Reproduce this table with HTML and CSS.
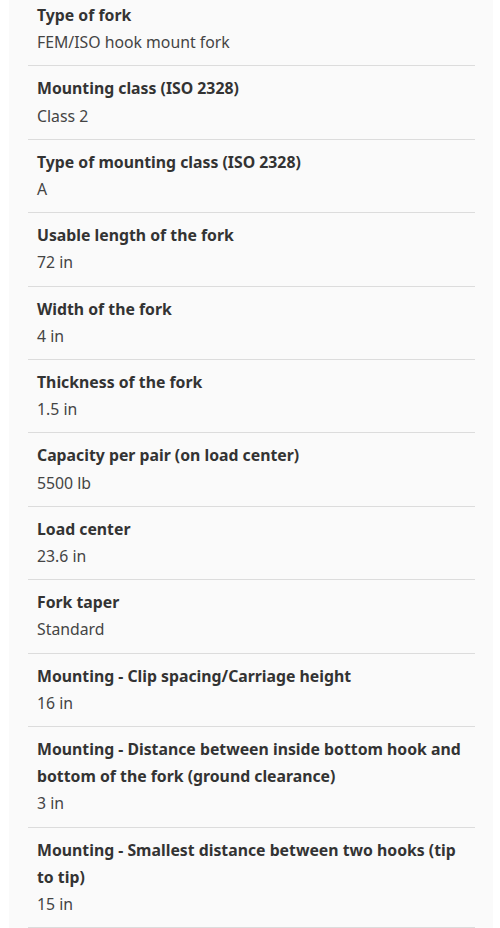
FILE: index.html
```html
<!DOCTYPE html>
<html lang="en">
<head>
  <meta charset="UTF-8" />
  <meta name="viewport" content="width=device-width, initial-scale=1.0"/>
  <title>Fork specifications</title>
  <link rel="stylesheet" href="styles.css">
</head>
<body>

  <!-- Specification list -->
  <div class="specs">
    <dl class="spec-list">
      <div class="spec">
        <dt>Type of fork</dt>
        <dd>FEM/ISO hook mount fork</dd>
      </div>
      <div class="spec">
        <dt>Mounting class (ISO 2328)</dt>
        <dd>Class 2</dd>
      </div>
      <div class="spec">
        <dt>Type of mounting class (ISO 2328)</dt>
        <dd>A</dd>
      </div>
      <div class="spec">
        <dt>Usable length of the fork</dt>
        <dd>72 in</dd>
      </div>
      <div class="spec">
        <dt>Width of the fork</dt>
        <dd>4 in</dd>
      </div>
      <div class="spec">
        <dt>Thickness of the fork</dt>
        <dd>1.5 in</dd>
      </div>
      <div class="spec">
        <dt>Capacity per pair (on load center)</dt>
        <dd>5500 lb</dd>
      </div>
      <div class="spec">
        <dt>Load center</dt>
        <dd>23.6 in</dd>
      </div>
      <div class="spec">
        <dt>Fork taper</dt>
        <dd>Standard</dd>
      </div>
      <div class="spec">
        <dt>Mounting - Clip spacing/Carriage height</dt>
        <dd>16 in</dd>
      </div>
      <div class="spec">
        <dt>Mounting - Distance between inside bottom hook and bottom of the fork (ground clearance)</dt>
        <dd>3 in</dd>
      </div>
      <div class="spec">
        <dt>Mounting - Smallest distance between two hooks (tip to tip)</dt>
        <dd>15 in</dd>
      </div>
    </dl>
  </div>

</body>
</html>
```

FILE: styles.css
```css
body {
  margin: 0;
  font-family: "Noto Sans", "Open Sans", sans-serif;
  background-color: #fff;
}
.specs {
  background: #fafafa;
  margin: -7px 7px 0 9px;
  padding: 0 18px 0 19px;
}
.spec-list {
  margin: 0;
}
/* Each row: bold label above its value */
.spec {
  padding: 9px 0 9px 9px;
  border-bottom: 1px solid #dcdcdc;
  font-size: 15.8px;
  line-height: 27.2px;
}
.spec dt {
  font-weight: bold;
  color: #333;
}
.spec dd {
  margin: 0;
  color: #444;
}
```
